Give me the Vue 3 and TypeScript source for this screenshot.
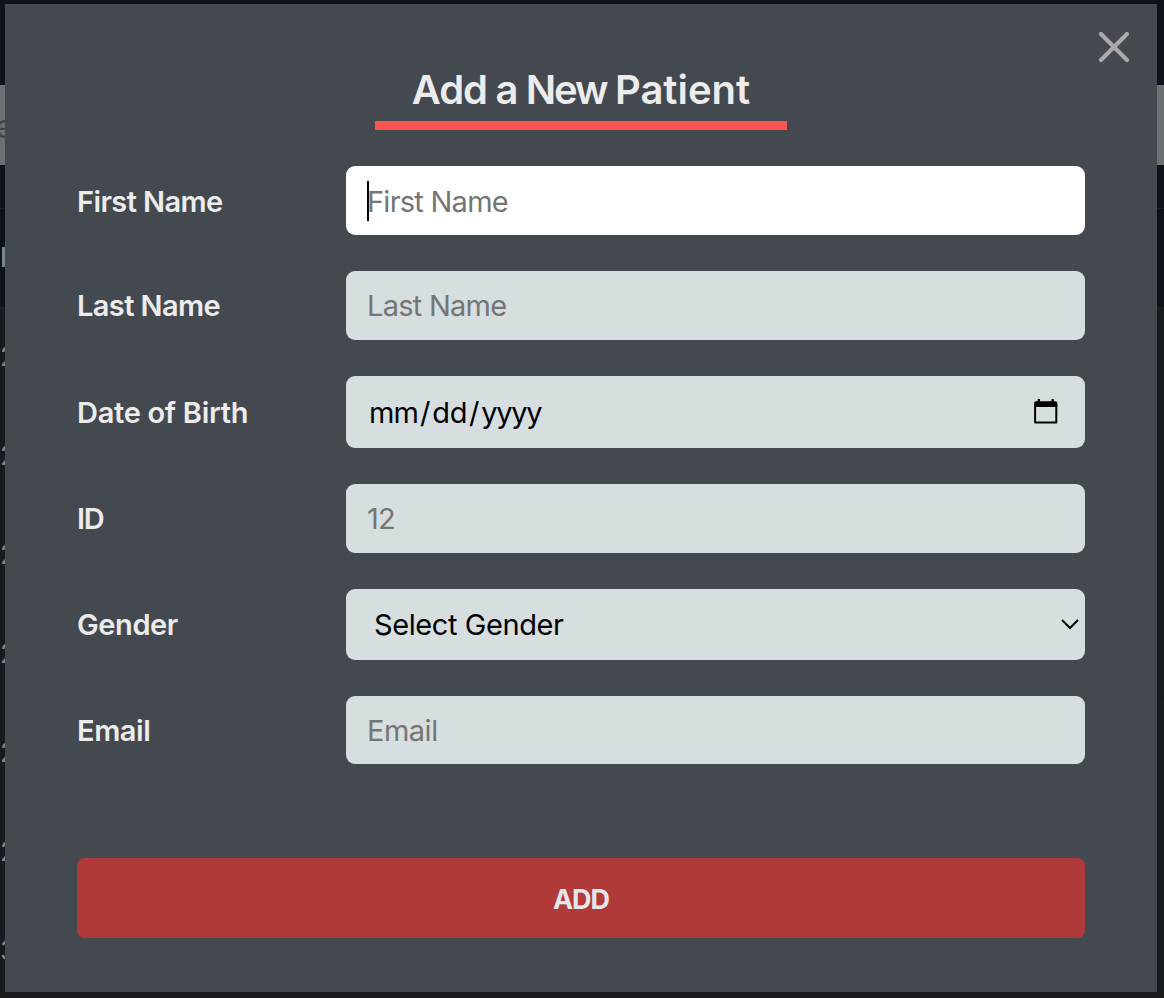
<script setup lang="ts">
import { ref } from 'vue'

interface Field {
  id: string
  label: string
  kind: 'text' | 'date' | 'select'
  placeholder: string
  active?: boolean
}

const fields: Field[] = [
  { id: 'first', label: 'First Name', kind: 'text', placeholder: 'First Name', active: true },
  { id: 'last', label: 'Last Name', kind: 'text', placeholder: 'Last Name' },
  { id: 'birth', label: 'Date of Birth', kind: 'date', placeholder: 'mm/dd/yyyy' },
  { id: 'number', label: 'ID', kind: 'text', placeholder: '12' },
  { id: 'gender', label: 'Gender', kind: 'select', placeholder: 'Select Gender' },
  { id: 'email', label: 'Email', kind: 'text', placeholder: 'Email' },
]
const tableRows = ['2', '2', '2', '2', '2', '2', '3']
const gender = ref('')
</script>

<template>
  <div class="screen">
    <div class="behind" aria-hidden="true">
      <div class="top"></div>
      <div class="search">e</div>
      <div class="space"></div>
      <div class="head">I</div>
      <div v-for="(n, i) in tableRows" :key="i" class="tr">{{ n }}</div>
    </div>

    <section class="modal" role="dialog">
      <button class="close" type="button" aria-label="Close">
        <svg width="32" height="32" viewBox="0 0 32 32">
          <path d="M3 3 29 29M29 3 3 29" fill="none" stroke="#aaa" stroke-width="4.2" stroke-linecap="round" />
        </svg>
      </button>
      <h1 class="title"><span>Add a <span class="new">New</span> <span class="patient">Patient</span></span></h1>
      <form class="form" @submit.prevent>
        <div v-for="f in fields" :key="f.id" class="row" :class="f.id">
          <label class="label" :for="f.id">{{ f.label }}</label>
          <div class="control" :class="{ active: f.active }">
            <input v-if="f.kind === 'text'" :id="f.id" type="text" :placeholder="f.placeholder" />
            <template v-else-if="f.kind === 'date'">
              <span class="date"><span class="mm">mm</span><span class="slash">/</span><span class="dd">dd</span><span class="slash">/</span><span class="yy">yyyy</span></span>
              <svg class="calendar" width="24" height="26" viewBox="0 0 24 26">
                <path d="M1.1 5h21.2v18.4H1.1z" fill="none" stroke="#000" stroke-width="2" stroke-linejoin="round" />
                <path d="M.1 4Q.1 2.2 2 2.2H3.7V0H6v2.2h11.5V0h2.3v2.2h1.6Q23.3 2.2 23.3 4v4H.1z" />
              </svg>
            </template>
            <template v-else>
              <select :id="f.id" v-model="gender"><option value="">{{ f.placeholder }}</option></select>
              <svg class="chevron" width="18" height="12" viewBox="0 0 18 12">
                <path d="M1 1 9 9 17 1" fill="none" stroke="#000" stroke-width="2" />
              </svg>
            </template>
            <i v-if="f.active" class="caret"></i>
          </div>
        </div>
        <button class="submit" type="submit">ADD</button>
      </form>
    </section>
  </div>
</template>

<style>
html,
body {
  margin: 0;
  overflow: hidden;
}
</style>

<style scoped>
* {
  box-sizing: border-box;
}
.screen {
  position: relative;
  width: 1164px;
  height: 998px;
  overflow: hidden;
  background: #14191c;
  font-family: Inter, sans-serif;
}
.behind {
  color: #858585;
  font-size: 27px;
}
.top {
  height: 85px;
  background: #0d121b;
}
.search {
  height: 80px;
  line-height: 84px;
  background: #6b7070;
  color: #434546;
  font-size: 32px;
  text-indent: -5px;
}
.space {
  height: 43px;
  background: #0d121b;
}
.head {
  height: 99px;
  border-top: 1px solid #1a1d20;
  background: #0d121a;
  line-height: 98px;
  font-weight: 600;
}
.tr {
  height: 99px;
  border-top: 1px solid #1a1e21;
  background: #171b1d;
  line-height: 98px;
}
.modal {
  position: absolute;
  left: 5px;
  top: 4px;
  width: 1152px;
  height: 988px;
  padding: 58px 72px 0;
  background: #44484f;
  color: #ececec;
}
.close {
  position: absolute;
  right: 27px;
  top: 27px;
  width: 32px;
  height: 32px;
  padding: 0;
  border: 0;
  background: none;
}
.close svg {
  display: block;
}
.title {
  display: flex;
  justify-content: center;
  width: 412px;
  height: 68px;
  margin: 0 auto;
  border-bottom: 9px solid #ff5252;
  font-size: 40px;
  font-weight: 600;
  line-height: 56px;
  letter-spacing: -1.1px;
  word-spacing: -0.5px;
  white-space: nowrap;
}
.new {
  letter-spacing: -2.1px;
}
.patient {
  letter-spacing: 0;
}
.form {
  display: flex;
  flex-direction: column;
  gap: 36px;
  padding-top: 36px;
}
.row {
  display: grid;
  grid-template-columns: 269px 739px;
  align-items: center;
  height: 69px;
}
.row.birth {
  height: 72px;
}
.row.gender {
  height: 71px;
}
.row.email {
  height: 68px;
}
.label {
  font-size: 29px;
  font-weight: 600;
  line-height: 40px;
  letter-spacing: -0.6px;
  white-space: nowrap;
}
.first .label,
.birth .label,
.email .label {
  padding-top: 2px;
}
.birth .label {
  letter-spacing: -0.3px;
}
.number .label {
  letter-spacing: -1.3px;
}
.gender .label,
.email .label {
  letter-spacing: -0.4px;
}
.control {
  position: relative;
  display: flex;
  align-items: center;
  height: 100%;
  overflow: hidden;
  border-radius: 9px;
  background: #d7dedf;
  color: #000;
  font-size: 29px;
}
.control.active {
  background: #fff;
}
input,
select {
  width: 100%;
  height: 100%;
  padding: 0 21px;
  border: 0;
  outline: 0;
  appearance: none;
  background: transparent;
  color: #000;
  font: 400 29px Inter, sans-serif;
  letter-spacing: -0.75px;
}
.first input {
  padding-top: 2px;
}
.email input {
  letter-spacing: -0.5px;
}
select {
  padding-left: 28px;
  letter-spacing: -0.42px;
}
input::placeholder {
  color: #757575;
  opacity: 1;
}
.date {
  display: flex;
  padding-left: 23px;
}
.mm {
  letter-spacing: -0.8px;
}
.dd {
  letter-spacing: -0.3px;
}
.yy {
  letter-spacing: -1.3px;
}
.slash {
  width: 14px;
  text-align: center;
}
.calendar {
  margin-left: auto;
  margin-right: 27px;
}
.chevron {
  position: absolute;
  right: 6px;
  top: 30px;
}
.caret {
  position: absolute;
  left: 21px;
  top: 15px;
  width: 2px;
  height: 40px;
  background: #000;
}
.submit {
  height: 80px;
  margin-top: 58px;
  padding: 2px 0 0;
  border: 0;
  border-radius: 8px;
  background: #b03939;
  color: #e7e7e9;
  font: 700 27px Inter, sans-serif;
  letter-spacing: -1.1px;
}
</style>
